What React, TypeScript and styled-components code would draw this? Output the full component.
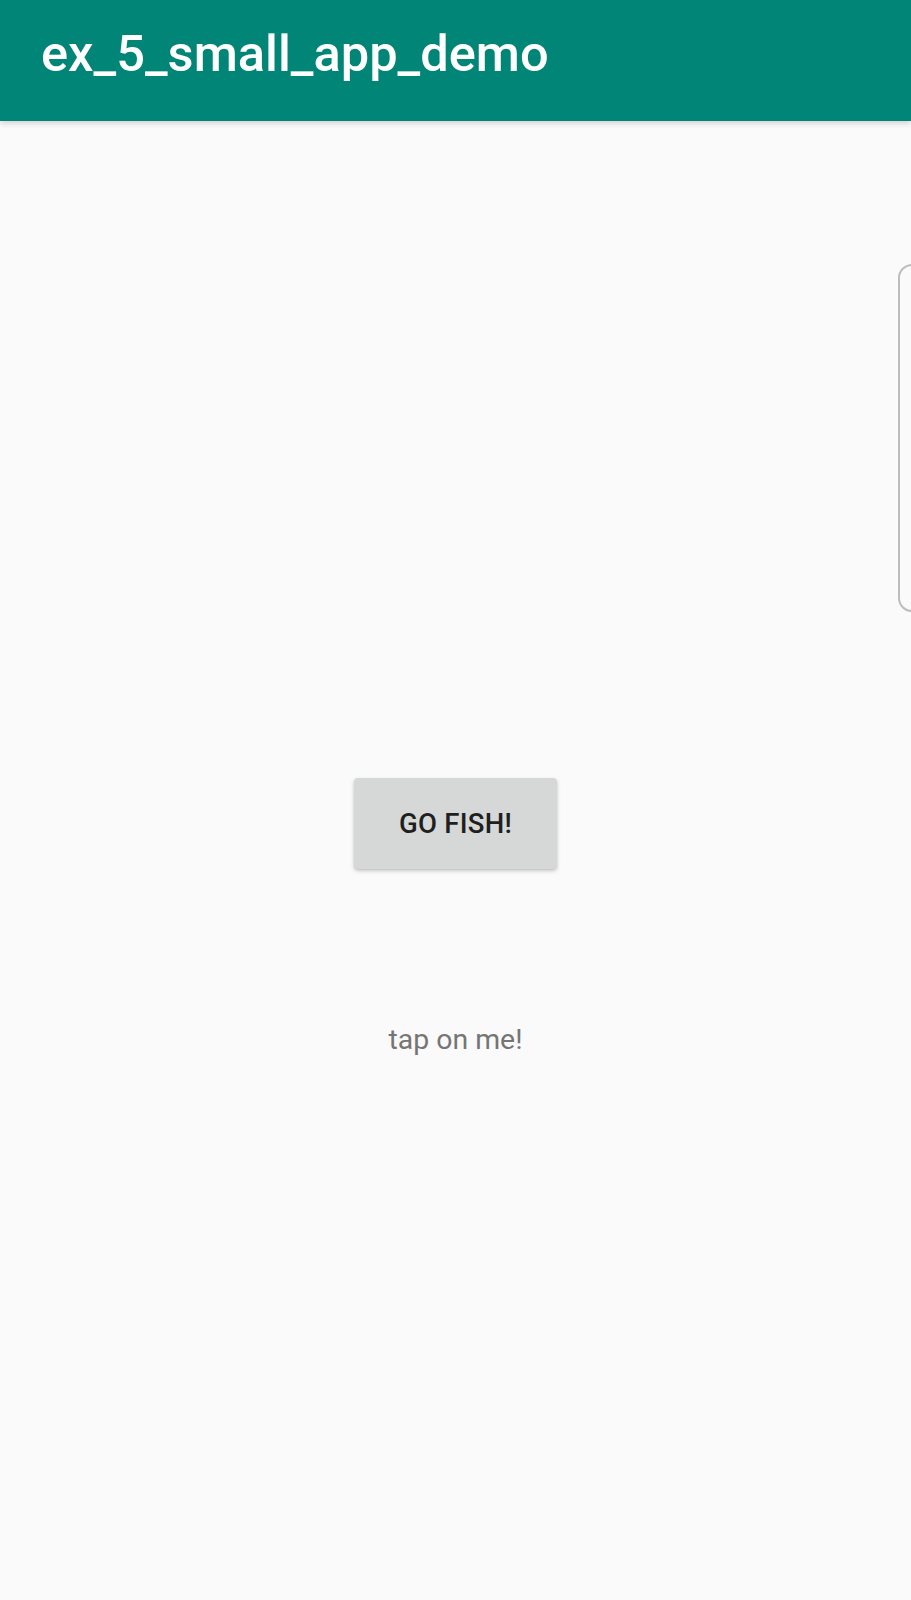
import React from "react";
import styled, { createGlobalStyle } from "styled-components";

const Global = createGlobalStyle`
  html, body {
    margin: 0;
    padding: 0;
    background: #fafafa;
  }
  body {
    font-family: Roboto, "Noto Sans", sans-serif;
    overflow: hidden;
  }
`;

const Screen = styled.div`
  position: relative;
  width: 911px;
  height: 1600px;
  background: #fafafa;
  overflow: hidden;
  display: flex;
  flex-direction: column;
`;

const AppBar = styled.header`
  height: 121px;
  box-sizing: border-box;
  background: #008577;
  padding: 24px 0 0 41px;
  box-shadow: 0 2px 6px rgba(0, 0, 0, 0.18);
  position: relative;
  z-index: 1;
  flex-shrink: 0;
`;

const Title = styled.h1`
  margin: 0;
  font-family: Roboto, sans-serif;
  font-weight: 500;
  font-size: 50.6px;
  line-height: 60px;
  color: #ffffff;
`;

const Content = styled.main`
  flex: 1;
  display: flex;
  flex-direction: column;
  align-items: center;
  padding-top: 657px;
`;

const FishButton = styled.button`
  width: 203px;
  height: 91px;
  border: none;
  border-radius: 4px;
  background: #d6d7d7;
  color: #1f1f1f;
  font-family: Roboto, sans-serif;
  font-weight: 500;
  font-size: 27.5px;
  letter-spacing: 0.01em;
  display: flex;
  align-items: center;
  justify-content: center;
  box-shadow: 0 2px 4px rgba(0, 0, 0, 0.18), 0 1px 2px rgba(0, 0, 0, 0.08);
  padding: 0;
  cursor: pointer;
`;

const Hint = styled.p`
  margin: 154px 0 0;
  font-family: Roboto, sans-serif;
  font-weight: 400;
  font-size: 28.4px;
  line-height: 34px;
  color: #757575;
`;

const EdgeHandle = styled.div`
  position: absolute;
  left: 898px;
  top: 264px;
  width: 30px;
  height: 348px;
  border: 2px solid #bdbdbd;
  border-radius: 14px;
  box-sizing: border-box;
`;

export default function App() {
  return (
    <>
      <Global />
      <Screen>
        <AppBar>
          <Title>ex_5_small_app_demo</Title>
        </AppBar>
        <Content>
          <FishButton>GO FISH!</FishButton>
          <Hint>tap on me!</Hint>
        </Content>
        <EdgeHandle />
      </Screen>
    </>
  );
}
